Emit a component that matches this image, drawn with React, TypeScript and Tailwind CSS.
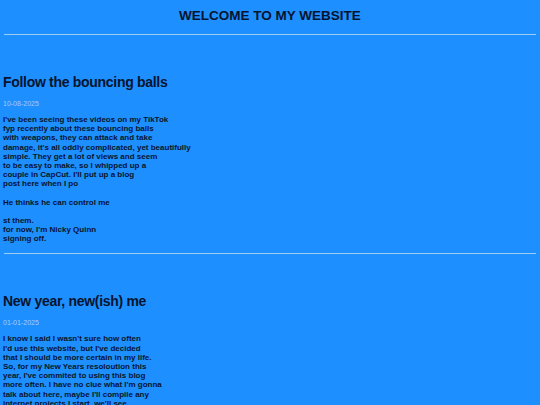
const posts = [
  {
    title: "Follow the bouncing balls",
    date: "10-08-2025",
    paragraphs: [
      [
        "I've been seeing these videos on my TikTok",
        "fyp recently about these bouncing balls",
        "with weapons, they can attack and take",
        "damage, it's all oddly complicated, yet beautifully",
        "simple. They get a lot of views and seem",
        "to be easy to make, so I whipped up a",
        "couple in CapCut. I'll put up a blog",
        "post here when I po",
      ],
      ["He thinks he can control me"],
      ["st them.", "for now, I'm Nicky Quinn", "signing off."],
    ],
  },
  {
    title: "New year, new(ish) me",
    date: "01-01-2025",
    paragraphs: [
      [
        "I know I said I wasn't sure how often",
        "I'd use this website, but I've decided",
        "that I should be more certain in my life.",
        "So, for my New Years resoloution this",
        "year, I've commited to using this blog",
        "more often. I have no clue what I'm gonna",
        "talk about here, maybe I'll compile any",
        "internet projects I start, we'll see.",
      ],
    ],
  },
]

export default function App() {
  return (
    <main className="min-h-[405px] w-full bg-[#1e8fff] px-[3px] text-[#07142e] font-['Liberation_Sans',Arial,sans-serif]">
      <h1 className="pt-[8px] text-center text-[13.5px] font-bold leading-[16px]">WELCOME TO MY WEBSITE</h1>
      <hr className="mx-[1px] mt-[10px] border-t border-[#9fcdf6]" />

      {posts.map((post) => (
        <article key={post.title}>
          <div className="pt-[39px] pb-[10px]">
            <h2 className="text-[14px] font-bold leading-[17px] tracking-[-0.3px]">{post.title}</h2>
            <p className="mt-[9px] text-[7px] leading-[8px] text-[#a4cdf5]">{post.date}</p>
            <div className="mt-[7px] flex flex-col gap-[9px] text-[8px] font-bold leading-[9.2px]">
              {post.paragraphs.map((lines, i) => (
                <p key={i}>
                  {lines.map((line, j) => (
                    <span key={j} className="block">{line}</span>
                  ))}
                </p>
              ))}
            </div>
          </div>
          <hr className="mx-[1px] border-t border-[#9fcdf6]" />
        </article>
      ))}
    </main>
  )
}
